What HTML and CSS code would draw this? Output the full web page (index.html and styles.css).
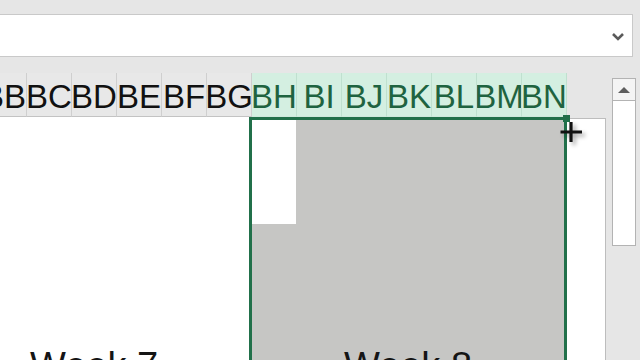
FILE: index.html
```html
<!DOCTYPE html>
<html>
<head>
<meta charset="utf-8">
<link rel="stylesheet" href="styles.css">
</head>
<body>
<div class="app">
  <div class="topgap"></div>
  <div class="formula">
    <svg class="chev" width="14" height="9" viewBox="0 0 14 9"><path d="M2 2 L7 7 L12 2" fill="none" stroke="#5a5a5a" stroke-width="2.6"/></svg>
  </div>
  <div class="main">
    <div class="sheet">
      <div class="colhead">
        <div class="ch"><span>BB</span></div>
        <div class="ch"><span>BC</span></div>
        <div class="ch"><span>BD</span></div>
        <div class="ch"><span>BE</span></div>
        <div class="ch"><span>BF</span></div>
        <div class="ch"><span>BG</span></div>
        <div class="ch on"><span>BH</span></div>
        <div class="ch on"><span>BI</span></div>
        <div class="ch on"><span>BJ</span></div>
        <div class="ch on"><span>BK</span></div>
        <div class="ch on"><span>BL</span></div>
        <div class="ch on"><span>BM</span></div>
        <div class="ch on"><span>BN</span></div>
        <div class="ch-rest"></div>
      </div>
      <div class="grid">
        <div class="left"><div class="week wk7">Week 7</div></div>
        <div class="sel">
          <div class="active"></div>
          <div class="week wk8">Week 8</div>
          <div class="handle"></div>
        </div>
        <div class="right"></div>
      </div>
      <svg class="cursor" width="25" height="23" viewBox="0 0 25 23"><path d="M11 1 V21 M0.5 11 H22" stroke="#111" stroke-width="3.2" fill="none"/></svg>
    </div>
    <div class="vscroll">
      <div class="sbox">
        <div class="sbtn"><svg width="12" height="6" viewBox="0 0 12 6"><path d="M0 6 L6 0 L12 6 Z" fill="#5e5e5e"/></svg></div>
        <div class="thumb"></div>
      </div>
    </div>
  </div>
</div>
</body>
</html>
```
FILE: styles.css
```css
html, body {
  margin: 0;
  padding: 0;
}
body {
  width: 640px;
  height: 360px;
  overflow: hidden;
  background: #e6e6e6;
  font-family: "Liberation Sans", Arial, sans-serif;
}
.app {
  width: 640px;
  height: 360px;
  overflow: hidden;
}
.topgap {
  height: 14px;
}
.formula {
  box-sizing: border-box;
  margin-left: -1px;
  width: 634px;
  height: 43px;
  background: #fff;
  border: 1px solid #c9c9c9;
  display: flex;
  justify-content: flex-end;
  align-items: center;
  padding-right: 7px;
}
.chev {
  display: block;
  margin-top: 1px;
}
.main {
  margin-top: 16px;
  display: flex;
  height: 287px;
}
.sheet {
  position: relative;
  width: 606px;
  flex: 0 0 606px;
  overflow: hidden;
}
.colhead {
  display: flex;
  margin-left: -18px;
  height: 44px;
}
.ch {
  box-sizing: border-box;
  flex: 0 0 45px;
  height: 44px;
  border-right: 1px solid #cfcfcf;
  border-bottom: 1px solid #c3c3c3;
  background: #e8e8e8;
  color: #111;
  display: flex;
  justify-content: center;
  overflow: hidden;
  font-size: 33px;
  line-height: 37px;
  padding-top: 5px;
  white-space: nowrap;
}
.ch span {
  flex: 0 0 auto;
}
.ch.on {
  background: #d4efe1;
  color: #1f6340;
  border-right-color: #bfe0cf;
  border-bottom-color: #cfe9dc;
}
.ch-rest {
  flex: 1 1 auto;
}
.grid {
  display: flex;
  height: 243px;
}
.left {
  flex: 0 0 249px;
  background: #fff;
  padding-top: 230px;
  box-sizing: border-box;
}
.week {
  font-size: 38px;
  line-height: 38px;
  color: #151515;
  white-space: nowrap;
}
.wk7 {
  padding-left: 30px;
}
.sel {
  position: relative;
  box-sizing: border-box;
  flex: 0 0 318px;
  background: #c6c6c4;
  border: 3px solid #21704a;
  border-bottom: none;
}
.active {
  width: 44px;
  height: 104px;
  background: #fff;
}
.wk8 {
  margin-top: 123px;
  text-align: center;
}
.handle {
  position: absolute;
  top: -5px;
  right: -6px;
  width: 7px;
  height: 7px;
  background: #21704a;
}
.right {
  flex: 1 1 auto;
  margin-top: 1px;
  background: #fff;
  border-top: 1px solid #bdbdbd;
  border-right: 1px solid #bdbdbd;
}
.cursor {
  position: absolute;
  left: 560px;
  top: 48px;
  filter: drop-shadow(3px 3px 2px rgba(0,0,0,0.35));
}
.vscroll {
  flex: 1 1 auto;
  padding: 5px 0 0 6px;
}
.sbox {
  width: 24px;
}
.sbtn {
  box-sizing: border-box;
  height: 23px;
  background: #f4f4f4;
  border: 1px solid #b3b3b3;
  display: flex;
  align-items: center;
  justify-content: center;
}
.sbtn svg {
  display: block;
  margin-top: 1px;
}
.thumb {
  box-sizing: border-box;
  height: 145px;
  background: #fff;
  border: 1px solid #b3b3b3;
  border-top: none;
}
```
